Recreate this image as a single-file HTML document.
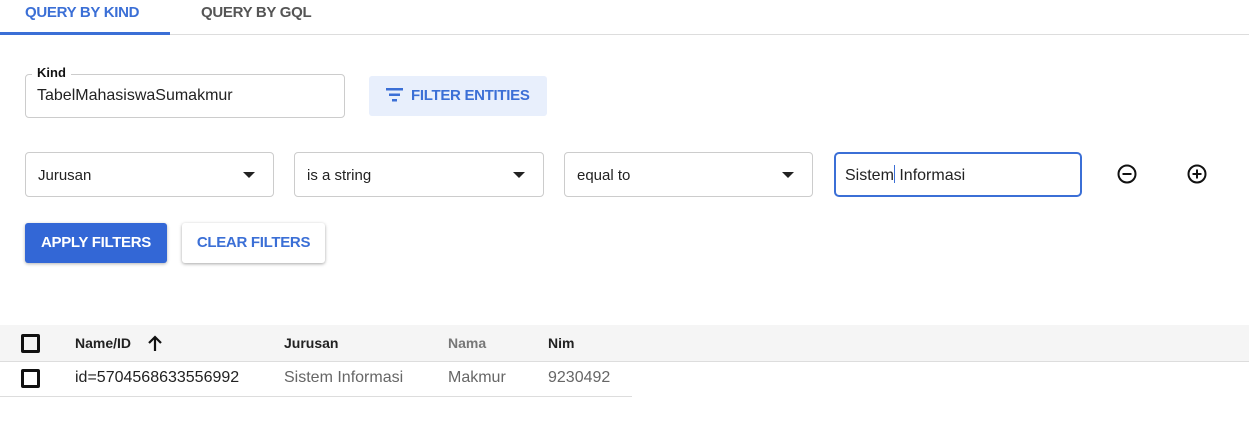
<!DOCTYPE html><html><head><style>
body{margin:0;width:1249px;height:434px;background:#fff;font-family:"Liberation Sans",sans-serif;position:relative;overflow:hidden}
.a{position:absolute}
.tab{font-size:15px;font-weight:bold;top:4px;letter-spacing:-0.3px}
.box{border:1px solid #ccc;border-radius:4px;box-sizing:border-box}
.sel{top:152px;height:45px;font-size:15px;color:#222}
.sel span{position:absolute;left:12px;top:14px}
.sel i{position:absolute;right:18px;top:19px;width:0;height:0;border-left:6px solid transparent;border-right:6px solid transparent;border-top:6px solid #222}
.cb{width:14px;height:14px;border:2.5px solid #111;border-radius:2px}
.th{font-size:14px;font-weight:bold;top:335px;color:#222}
.td{font-size:15px;top:370px;color:#666}
</style></head><body>
<div class="a tab" style="left:25px;color:#3b6fd6">QUERY BY KIND</div>
<div class="a tab" style="left:201px;color:#555">QUERY BY GQL</div>
<div class="a" style="left:0;top:34px;width:1249px;height:1px;background:#ddd"></div>
<div class="a" style="left:0;top:32px;width:170px;height:3px;background:#3b6fd6"></div>

<div class="a box" style="left:25px;top:74px;width:320px;height:44px"></div>
<div class="a" style="left:32px;top:65px;padding:0 5px;background:#fff;font-size:13px;font-weight:bold;color:#111">Kind</div>
<div class="a" style="left:37px;top:87px;font-size:16px;color:#222">TabelMahasiswaSumakmur</div>

<div class="a" style="left:369px;top:76px;width:178px;height:40px;background:#e8effc;border-radius:3px"></div>
<svg class="a" style="left:386px;top:88px" width="18" height="14"><rect x="0" y="0" width="17" height="2.5" fill="#3b6fd6"/><rect x="3" y="5.5" width="11" height="2.5" fill="#3b6fd6"/><rect x="6" y="11" width="5" height="2.5" fill="#3b6fd6"/></svg>
<div class="a" style="left:411px;top:87px;font-size:15px;font-weight:bold;color:#3b6fd6;letter-spacing:-0.3px">FILTER ENTITIES</div>

<div class="a box sel" style="left:25px;width:249px"><span>Jurusan</span><i></i></div>
<div class="a box sel" style="left:294px;width:250px"><span>is a string</span><i></i></div>
<div class="a box sel" style="left:564px;width:249px"><span>equal to</span><i></i></div>
<div class="a sel" style="left:834px;width:248px;border:2.5px solid #3b6fd6;border-radius:5px;box-sizing:border-box"><span style="left:9px;top:11px;font-size:16px">Sistem<b style="display:inline-block;width:1px;height:18px;background:#3b6fd6;vertical-align:-3px;font-weight:normal"></b> Informasi</span></div>
<svg class="a" style="left:1116px;top:163px" width="22" height="22"><circle cx="11" cy="11" r="8.5" fill="none" stroke="#111" stroke-width="2"/><rect x="6.5" y="10" width="9" height="2" fill="#111"/></svg>
<svg class="a" style="left:1186px;top:163px" width="22" height="22"><circle cx="11" cy="11" r="8.5" fill="none" stroke="#111" stroke-width="2"/><rect x="6.5" y="10" width="9" height="2" fill="#111"/><rect x="10" y="6.5" width="2" height="9" fill="#111"/></svg>

<div class="a" style="left:25px;top:223px;width:142px;height:40px;background:#3367d6;border-radius:3px;box-shadow:0 1px 3px rgba(0,0,0,.3);color:#fff;font-size:15px;font-weight:bold;text-align:center;line-height:40px;letter-spacing:-0.3px">APPLY FILTERS</div>
<div class="a" style="left:182px;top:223px;width:143px;height:40px;background:#fff;border-radius:3px;box-shadow:0 1px 3px rgba(0,0,0,.35);color:#3b6fd6;font-size:15px;font-weight:bold;text-align:center;line-height:40px;letter-spacing:-0.3px">CLEAR FILTERS</div>

<div class="a" style="left:0;top:325px;width:1249px;height:36px;background:#f5f5f5;border-bottom:1px solid #ddd"></div>
<div class="a cb" style="left:21px;top:334px;border-width:3px;width:13px;height:13px"></div>
<div class="a th" style="left:75px">Name/ID</div>
<svg class="a" style="left:146px;top:334px" width="18" height="18"><path d="M9 17V3M3 9l6-6 6 6" fill="none" stroke="#111" stroke-width="2.2"/></svg>
<div class="a th" style="left:284px">Jurusan</div>
<div class="a th" style="left:448px;color:#777">Nama</div>
<div class="a th" style="left:548px">Nim</div>
<div class="a" style="left:0;top:396px;width:632px;height:1px;background:#ddd"></div>
<div class="a cb" style="left:21px;top:369px;border-width:3px;width:13px;height:13px"></div>
<div class="a td" style="left:75px;color:#222;font-size:16px;top:369px">id=5704568633556992</div>
<div class="a td" style="left:284px;font-size:16px;top:369px">Sistem Informasi</div>
<div class="a td" style="left:448px;font-size:16px;top:369px">Makmur</div>
<div class="a td" style="left:548px;font-size:16px;top:369px">9230492</div>
</body></html>
